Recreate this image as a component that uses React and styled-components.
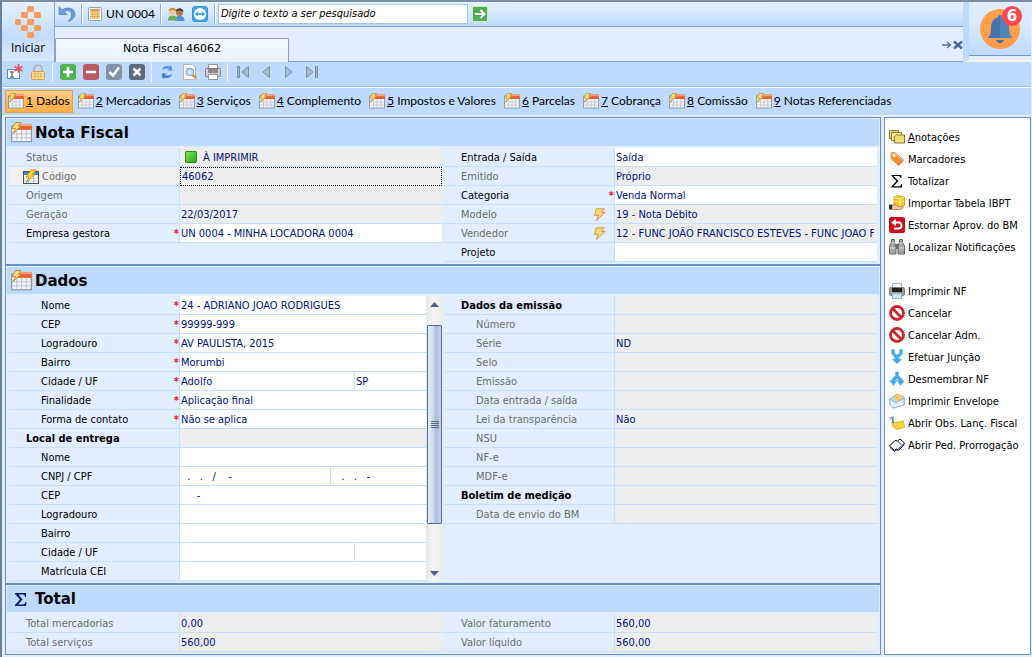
import React, { useId } from "react";
import styled, { createGlobalStyle, css } from "styled-components";

const uiFont = `"DejaVu Sans Condensed", "DejaVu Sans", sans-serif`;
const menuFont = `Lato, "Open Sans", sans-serif`;
const titleFont = `"DejaVu Sans", sans-serif`;

const GlobalStyle = createGlobalStyle`
  * {
    box-sizing: border-box;
  }
  body {
    margin: 0;
    background: #e2eeff;
    color: #000;
    font: 11px/18px ${uiFont};
  }
  button, input {
    margin: 0;
    padding: 0;
    border: 0;
    background: none;
    color: inherit;
    font: inherit;
  }
  svg {
    display: block;
    flex: none;
  }
`;

const Window = styled.div`
  min-height: 100vh;
  padding-right: 1px;
  border-top: 2px solid #7b8ea6;
  border-left: 2px solid #64819f;
`;

/* ---------- header ---------- */

const Header = styled.header`
  display: grid;
  grid-template-columns: 53px minmax(0, 1fr) 68px;
  height: 57px;
`;

const StartButton = styled.button`
  display: flex;
  flex-direction: column;
  align-items: center;
  justify-content: space-between;
  padding: 3px 0 4px;
  border-right: 1px solid #86a9da;
  border-bottom: 1px solid #bedaff;
  background: linear-gradient(#e6f0ff, #c3dcff 60%, #d9e9ff);
  font: 12px/18px "Open Sans", sans-serif;
`;

const HeaderCenter = styled.div`
  display: flex;
  flex-direction: column;
`;

const QuickBar = styled.div`
  display: flex;
  align-items: center;
  height: 25px;
  padding-bottom: 1px;
  border-bottom: 1px solid #7ba5de;
  background: linear-gradient(#e6f1ff, #d3e6ff 50%, #bedaff);
`;

const QuickButton = styled.button`
  display: flex;
  align-items: center;
  justify-content: center;
  gap: 4px;
  min-width: 24px;
  height: 22px;
  padding: 0 3px;
  font: 12px/18px ${menuFont};
`;

const Divider = styled.span`
  width: 2px;
  height: 20px;
  margin: 0 2px;
  border-left: 1px solid #8db2e3;
  border-right: 1px solid #fff;
`;

const SearchInput = styled.input`
  width: 250px;
  height: 20px;
  padding: 0 2px;
  border: 1px solid #a9c3e6;
  background: #fff;
  font-style: italic;
  &::placeholder {
    color: #000;
    opacity: 1;
  }
`;

const TabStrip = styled.div`
  display: flex;
  align-items: flex-end;
  flex: 1;
  border-bottom: 1px solid #8c9fc9;
  background: #e2eeff;
`;

const DocumentTab = styled.button`
  width: 234px;
  height: 24px;
  padding-bottom: 4px;
  margin-bottom: -1px;
  border: 1px solid #8c9fc9;
  border-bottom: 0;
  border-radius: 2px 2px 0 0;
  background: linear-gradient(#f4f8ff, #e9f2ff);
  font: 11px/18px ${titleFont};
`;

const StripActions = styled.div`
  display: flex;
  align-items: center;
  gap: 1px;
  height: 32px;
  margin-left: auto;
`;

const Notifications = styled.div`
  border-left: 6px solid #bedaff;
  border-bottom: 3px solid #f0f0f0;
`;

const BellButton = styled.button`
  position: relative;
  display: block;
  width: 100%;
  height: 54px;
  padding: 6px 11px;
  border-bottom: 1px solid #6f9bd6;
  background: linear-gradient(#e2eeff, #d3e6ff 60%, #bedaff);
`;

const Badge = styled.span`
  position: absolute;
  top: 4px;
  right: 9px;
  width: 20px;
  height: 20px;
  border-radius: 50%;
  background: #fb4a4c;
  color: #fff;
  font: bold 15px/20px ${titleFont};
  text-align: center;
`;

/* ---------- toolbars ---------- */

const Toolbar = styled.div`
  display: flex;
  align-items: center;
  height: 28px;
  padding: 0 0 1px 1px;
  border-bottom: 1px solid #8fb9f0;
  background: #bedaff;
`;

const ToolButton = styled.button`
  display: flex;
  align-items: center;
  justify-content: center;
  width: 23px;
  height: 22px;
`;

const ToolDivider = styled.span`
  width: 1px;
  height: 19px;
  margin: 0 3px;
  background: #eef5ff;
`;

const SectionTabs = styled.nav`
  display: flex;
  gap: 2px;
  padding: 2px 3px;
  border-top: 1px solid #fff;
  background: #bedaff;
`;

const SectionTab = styled.button`
  display: flex;
  align-items: center;
  gap: 2px;
  height: 23px;
  padding: 0 2px 1px;
  border: 1px solid transparent;
  font: 12px/18px ${menuFont};
  white-space: nowrap;
  ${(props) =>
    props.$active &&
    css`
      border-color: #dba04c;
      background: linear-gradient(#ffd08a, #ffb95c 50%, #ffad46);
    `}
`;

/* ---------- panels ---------- */

const Main = styled.main`
  display: grid;
  grid-template-columns: minmax(0, 1fr) 147px;
  gap: 3px;
  padding: 2px 0 1px 3px;
`;

const Panels = styled.div`
  display: flex;
  flex-direction: column;
`;

const Panel = styled.section`
  padding: 1px 1px 2px;
  border: 1px solid #6591cd;
  &:last-child {
    flex: 1;
  }
`;

const PanelHeader = styled.h2`
  display: flex;
  align-items: center;
  gap: 3px;
  height: ${(props) => (props.$compact ? 26 : 27)}px;
  margin: 0 0 2px;
  padding-left: 4px;
  background: #bedaff;
  font: bold 15px/20px ${titleFont};
`;

const PanelBody = styled.div`
  display: grid;
  grid-template-columns: repeat(2, minmax(0, 1fr));
  gap: 2px;
  padding: 0 2px;
`;

const Column = styled.div`
  display: flex;
`;

const Fields = styled.div`
  flex: 1;
  min-width: 0;
`;

const Row = styled.div`
  display: grid;
  grid-template-columns: 171px minmax(0, 1fr);
  height: 19px;
`;

const Label = styled.label`
  display: flex;
  align-items: center;
  gap: 3px;
  padding-top: 1px;
  padding-left: ${(props) => props.$indent}px;
  border-right: 1px solid #c6deff;
  border-bottom: 1px solid #c6deff;
  background: ${(props) => (props.$focused ? "#f0f0f0" : "none")};
  color: ${(props) => (props.$muted ? "#6d6d6d" : "#000")};
  font-weight: ${(props) => (props.$bold ? "bold" : "normal")};
  line-height: 17px;
  white-space: nowrap;
`;

const LabelMark = styled.span`
  display: flex;
  margin-left: auto;
  padding-right: ${(props) => (props.$wide ? 8 : 0)}px;
  color: #e8112d;
  font-weight: bold;
`;

const Value = styled.div`
  display: grid;
  grid-template-columns: ${(props) => props.$columns || "minmax(0, 1fr)"};
  padding-right: 3px;
  border-bottom: 1px solid #c6deff;
  background: ${(props) => (props.$muted ? "#eeeeee" : "#fff")};
  ${(props) =>
    props.$focused &&
    css`
      border: 1px dotted #000;
    `}
`;

const ValueInput = styled.input`
  width: 100%;
  min-width: 0;
  height: ${(props) => (props.$focused ? 17 : 18)}px;
  padding-top: ${(props) => (props.$focused ? 0 : 1)}px;
  padding-left: 1px;
  color: #00107e;
  line-height: 17px;
  & + & {
    border-left: 1px solid #c6deff;
  }
`;

const StatusMark = styled.span`
  width: 12px;
  height: 12px;
  margin: 3px 5px;
  border: 1px solid #2f8f1c;
  border-radius: 1px;
  background: linear-gradient(135deg, #7fe05c, #22ad18);
`;

const ScrollBar = styled.div`
  display: flex;
  flex-direction: column;
  width: 16px;
  padding-left: 1px;
  background: linear-gradient(90deg, #e6e6e6, #f4f4f4 40%, #ededed);
`;

const ScrollArrow = styled.button`
  display: flex;
  align-items: center;
  justify-content: center;
  height: 16px;
`;

const ScrollTrack = styled.div`
  flex: 1;
  padding-top: 13px;
`;

const ScrollThumb = styled.div`
  display: flex;
  align-items: center;
  justify-content: center;
  height: 83%;
  border: 1px solid #546a92;
  border-radius: 1px;
  background: linear-gradient(90deg, #e4eef6, #c9d8e6 45%, #a9bcd2 60%, #c6d6e8);
`;

/* ---------- side menu ---------- */

const SideMenu = styled.aside`
  display: flex;
  flex-direction: column;
  padding-top: 8px;
  border: 1px solid #6591cd;
  background: #fff;
`;

const SideItem = styled.button`
  display: flex;
  align-items: center;
  gap: 3px;
  height: 22px;
  padding-left: 4px;
  margin-top: ${(props) => (props.$spaced ? 22 : 0)}px;
  text-align: left;
  white-space: nowrap;
`;

const SideText = styled.span`
  padding-top: 1px;
`;

/* ---------- icons ---------- */

const Icon = ({ size = 16, box = 16, children }) => (
  <svg width={size} height={size} viewBox={`0 0 ${box} ${box}`} aria-hidden="true">
    {children}
  </svg>
);

const FormIcon = ({ size }) => (
  <Icon size={size}>
    <rect x="0.500" y="3" width="15" height="12" fill="#f4f5f8" stroke="#8f96a3" strokeWidth="0.900" />
    <rect x="5" y="1.500" width="11" height="4.500" fill="#e9602f" />
    <rect x="5" y="1.500" width="11" height="1.700" fill="#f3a07c" />
    <path d="M1 9h14M1 12h14M4.500 6v9M8 6v9M11.700 6v9" stroke="#b9c0cc" strokeWidth="0.700" />
    <path d="M3.500.400h4.200L5.500 3.200h2.200L1.500 9 3.400 5H.800z" fill="#ffdc70" stroke="#b58631" strokeWidth="0.700" />
  </Icon>
);

const CodeIcon = () => (
  <Icon>
    <rect x="0.500" y="2.500" width="15" height="12" fill="#fff" stroke="#4f4f4f" />
    <rect x="1" y="3" width="14" height="3" fill="#3f86d8" />
    <path d="M1 9h14M1 12h14M5.500 6v8M10.500 6v8" stroke="#9fb2c8" strokeWidth="0.700" />
    <path d="M8 1h5L9.500 5.500H12L3 14l3-6H3z" fill="#ffd42a" stroke="#b8860b" strokeWidth="0.700" />
  </Icon>
);

const BoltIcon = () => (
  <Icon size={13}>
    <path d="M4 1h10l-3.500 4.500H15L4 15.500 6.500 9H2z" fill="#ffd873" stroke="#c28b33" />
  </Icon>
);

const LogoIcon = () => (
  <svg width="32" height="34" viewBox="0 0 32 34" fill="#f99d5b" aria-hidden="true">
    <rect x="15" y="1" width="7" height="6" rx="1.500" />
    <rect x="9" y="7" width="7" height="6" rx="1.500" />
    <rect x="22" y="7" width="7" height="6" rx="1.500" />
    <rect x="3" y="14" width="6" height="6" rx="1.500" />
    <rect x="15" y="14" width="7" height="6" rx="1.500" />
    <rect x="9" y="20" width="7" height="6" rx="1.500" />
    <rect x="22" y="20" width="7" height="6" rx="1.500" />
    <rect x="15" y="27" width="7" height="6" rx="1.500" />
    <path d="M15 7.500h2M21 7.500h2M14 12.500l3 2M20 19l3 2M15 26.500h2M21 26.500h2" stroke="#f9b584" fill="none" />
  </svg>
);

const UndoIcon = () => (
  <Icon size={18}>
    <path d="M1 1.500v7h7L5.500 6C9 3.500 12 5.500 12 9c0 2-1 4-3 5.500 4-1 6-3.500 6-6.500 0-5-6-7-11.500-3.500z" fill="#6d9ae0" stroke="#4878c8" strokeWidth="0.600" />
  </Icon>
);

const GridIcon = () => (
  <Icon size={14} box={14}>
    <rect x="0.500" y="0.500" width="13" height="13" rx="1" fill="#fff" stroke="#8aa2c4" />
    <path d="M2 2h10v2H2z" fill="#f2a04e" />
    <path d="M2 5h10v7H2z" fill="#ffdf8c" />
    <path d="M2 4.500h10M2 7h10M2 9.500h10M4.500 2v10M7 2v10M9.500 2v10" stroke="#cf9348" strokeWidth="0.600" />
  </Icon>
);

const PeopleIcon = () => (
  <Icon size={18} box={18}>
    <path d="M8 16c0-4 2-5 4.500-5s5 1 5 5z" fill="#4d8fd6" />
    <circle cx="12.500" cy="7.500" r="3.500" fill="#a9784f" />
    <path d="M8.500 7c0-5 8-5 8 0-2-2-6-2-8 0z" fill="#4d3522" />
    <path d="M1 15.500c0-4 2-5 4.500-5s4.500 1 4.500 5z" fill="#6fae5c" />
    <circle cx="5.500" cy="7" r="3.500" fill="#f0c9a0" />
    <path d="M1.500 6.500c0-5 8-5 8 0-2-2-6-2-8 0z" fill="#c98a3c" />
  </Icon>
);

const RemoteIcon = () => (
  <Icon>
    <rect x="0.500" y="0.500" width="15" height="15" rx="2.500" fill="#45aae6" stroke="#2f92d0" />
    <circle cx="8" cy="8" r="6" fill="#fff" />
    <path d="M3 8l3-2.500v1.700h4V5.500L13 8l-3 2.500V8.800H6v1.700z" fill="#2f9fe0" />
  </Icon>
);

const GoIcon = () => (
  <Icon>
    <rect x="0.500" y="0.500" width="15" height="15" fill="#4fae4b" stroke="#d5e8d5" />
    <path d="M3 8h9M8.500 4l4 4-4 4" fill="none" stroke="#fff" strokeWidth="2" />
  </Icon>
);

const BellIcon = () => (
  <Icon size={40} box={40}>
    <circle cx="20" cy="20" r="20" fill="#ff9f4d" />
    <path d="M20 6c1.500 0 2 1 2 2.500 5 1 7 5 7 10 0 5 1 8 3 10.500H8c2-2.500 3-5.500 3-10.500 0-5 2-9 7-10C18 7 18.500 6 20 6z" fill="#4a72b0" />
    <path d="M20 6c1.500 0 2 1 2 2.500 5 1 7 5 7 10 0 5 1 8 3 10.500H20z" fill="#4f86b8" />
    <path d="M16 31h8c-1 4-7 4-8 0z" fill="#4a72b0" />
  </Icon>
);

const ArrowIcon = () => (
  <Icon size={10} box={10}>
    <path d="M0 5h8M5 2l3.500 3L5 8" fill="none" stroke="#4d74ad" strokeWidth="1.400" />
  </Icon>
);

const CrossIcon = () => (
  <Icon size={10} box={10}>
    <path d="M1 1.500l8 7M9 1.500l-8 7" stroke="#45699f" strokeWidth="2.400" />
  </Icon>
);

const NewIcon = () => (
  <Icon>
    <rect x="0.500" y="5.500" width="12" height="9" fill="#fff" stroke="#5b8ccc" />
    <path d="M3 8h4M5 8v5M3 13h4" stroke="#444" />
    <path d="M11.500 0v9M7.500 2.500l8 4.500M15.500 2.500l-8 4.500" stroke="#dd5555" strokeWidth="1.600" />
  </Icon>
);

const LockIcon = () => (
  <Icon>
    <path d="M4 8V5c0-5 8-5 8 0v3" fill="none" stroke="#b5b5b5" strokeWidth="2" />
    <rect x="1.500" y="7.500" width="13" height="8" rx="1" fill="#fbd98c" stroke="#d6a549" />
    <path d="M4 10h8M4 12.500h8" stroke="#c99a48" strokeDasharray="2 1" />
  </Icon>
);

const SquareIcon = ({ fill, path }) => (
  <Icon>
    <rect width="16" height="16" rx="3" fill={fill} />
    <path d={path} fill="none" stroke="#fff" strokeWidth="2.500" />
  </Icon>
);

const RefreshIcon = () => (
  <Icon>
    <path d="M3 6c1-3.500 4.500-5 7.500-3.500L12 1l1.500 5.500H8.500L10 5C7.500 3.800 5.500 4.500 3 6z" fill="#5b8fe0" />
    <path d="M13 10c-1 3.500-4.500 5-7.500 3.500L4 15 2.500 9.500h5L6 11c2.500 1.200 4.500.500 7-1z" fill="#4577cf" />
  </Icon>
);

const PreviewIcon = () => (
  <Icon>
    <path d="M1.500.500h9l3 3v12h-12z" fill="#fff" stroke="#b8b8b8" />
    <path d="M3 4h4M3 7h2M3 10h2" stroke="#c8c8c8" />
    <circle cx="8" cy="8" r="3.500" fill="#cfe7fb" stroke="#7aa9d6" strokeWidth="1.300" />
    <path d="M10.500 10.500l4 4" stroke="#d99a3e" strokeWidth="2.500" />
  </Icon>
);

const PrinterIcon = ({ dark }) => (
  <Icon>
    <rect x="3.500" y="0.500" width="9" height="5" fill="#fff" stroke={dark ? "#9db3cf" : "#999"} />
    <rect x="0.500" y="4.500" width="15" height="8" rx="1" fill={dark ? "#9a9a9a" : "#cfcfcf"} stroke="#808080" />
    <rect x="3" y="5" width="10" height="4" fill={dark ? "#222" : "#8a8a8a"} />
    <rect x="3.500" y="10.500" width="9" height="5" fill={dark ? "#cfe2f8" : "#fff"} stroke={dark ? "#9db3cf" : "#999"} />
  </Icon>
);

const NavIcon = ({ path }) => (
  <Icon>
    <path d={path} fill="#a9bacd" stroke="#7b8da5" />
  </Icon>
);

const SigmaIcon = () => (
  <Icon>
    <path d="M2.500 2h10v3h-1c0-1-.500-2-2-2h-5l5 5-5 5.200h6c1 0 1.500-.700 1.500-2h1V14.500h-11V14l5.500-6-5-5.300z" fill="#000" />
  </Icon>
);

const NotesIcon = () => (
  <Icon>
    <path d="M.500 1.500h9v8H.500z" fill="#f0dc8a" stroke="#8c7b2c" />
    <path d="M2.500 3.500h10v8h-10z" fill="#f5e7a0" stroke="#8c7b2c" />
    <path d="M5.500 7.500l2-1.500h8v8h-10z" fill="#f3dc7a" stroke="#8c7b2c" />
  </Icon>
);

const TagIcon = () => (
  <Icon>
    <path d="M2 3.500C2 2 4 1 5.500 1.500L14.500 9 10 14.500 2.500 8z" fill="#f89238" stroke="#e07a24" strokeLinejoin="round" />
    <path d="M3 4c1-2 2-2 3-1.500L13.500 9" fill="none" stroke="#ffc58a" />
    <circle cx="5" cy="4.500" r="1.500" fill="#fff" />
  </Icon>
);

const ImportIcon = () => (
  <Icon>
    <path d="M5 2l4-1.500L15.500 2v8.500L11 12 5 10z" fill="#f6c61e" stroke="#b98c0e" strokeWidth="0.700" />
    <path d="M5 2.500l6 1.500 4-2M11 4v8M5 6l6 1.500L15 6" fill="none" stroke="#fff0a0" />
    <path d="M3 10h3l4 1.500h4c1 1-1 3-4 3H3z" fill="#f3c99a" stroke="#a06f3c" strokeWidth="0.700" />
    <rect y="9.500" width="3" height="5" fill="#333" />
  </Icon>
);

const RevertIcon = () => (
  <Icon>
    <rect width="16" height="16" rx="2" fill="#cc0f18" />
    <path d="M5 5.500h4.500c4 0 4 6 0 6H5" fill="none" stroke="#fff" strokeWidth="2" />
    <path d="M2 5.500L7 2v7z" fill="#fff" />
  </Icon>
);

const BinocularsIcon = () => (
  <Icon>
    <path d="M2.500.500h3v3l1.500 3v8.500H.500V7L2.500 3zM10.500.500h3v3l2 3.500v8H9V6.500l1.500-3z" fill="#a5a5a5" stroke="#666" />
    <rect x="6.500" y="5" width="3" height="5" fill="#666" />
    <path d="M1 9h5.500M9.500 9H15M2.500 4h3M10.500 4h3" stroke="#e3e3e3" />
  </Icon>
);

const BlockIcon = () => (
  <Icon>
    <circle cx="8" cy="8" r="6.500" fill="#fff" stroke="#c6282d" strokeWidth="2.800" />
    <path d="M3.500 3.500l9 9" stroke="#c6282d" strokeWidth="2.800" />
  </Icon>
);

const JoinIcon = () => (
  <Icon>
    <path d="M2.500.500h3v3.500L8 6l2.500-2V.500h3V5L10 8.500V10h3l-5 5-5-5h3V8.500L2.500 5z" fill="#45abe8" stroke="#7cc4ee" strokeWidth="0.600" />
  </Icon>
);

const SplitIcon = () => (
  <Icon>
    <path d="M6.500 1h3v3.500L13 8v1.500h2.500l-4 5-3.500-5h2L8 7.500l-2 2h2l-3.500 5-4-5H3V8l3.500-3.500z" fill="#45a8e6" stroke="#6db9e8" strokeWidth="0.600" />
  </Icon>
);

const EnvelopeIcon = () => (
  <Icon>
    <path d="M1 6l7-5 7 3v8L4 15l-3-3z" fill="#b8dcf6" stroke="#7fa9d0" />
    <path d="M4 4l6-3 4 3-4 5z" fill="#fbc35b" />
    <path d="M1 6l6 4 8-5v7L4 15l-3-3z" fill="#e3f2fd" stroke="#7fa9d0" strokeWidth="0.800" />
  </Icon>
);

const NoteIcon = () => (
  <Icon>
    <path d="M3 6l3 1.500L14.500 6l1 6.500L7 14.500 3.500 11z" fill="#ffcf3a" stroke="#dca520" strokeWidth="0.700" />
    <path d="M3 2l1.500 6" stroke="#3f7fc0" strokeWidth="1.500" />
    <path d="M1 3.500L5 2" stroke="#78aee0" strokeWidth="2" />
  </Icon>
);

const BookIcon = () => (
  <Icon>
    <path d="M.500 9L6 3.500 8.500 4 11 2l4.500 4L9 12.500 7 12l-1.500 1.500z" fill="#fff" stroke="#000" />
    <path d="M1 10.500l4.500 4 2-1.500 2 .500 6-6" fill="none" stroke="#1c1c9c" />
    <path d="M8.500 4l4 4" stroke="#000" strokeWidth="0.700" />
  </Icon>
);

const Triangle = ({ down }) => (
  <Icon size={9} box={9}>
    <path d={down ? "M0 2h9L4.500 7z" : "M0 7h9L4.500 2z"} fill="#4b5c86" />
  </Icon>
);

/* ---------- data ---------- */

const sectionTabs = [
  "Dados",
  "Mercadorias",
  "Serviços",
  "Complemento",
  "Impostos e Valores",
  "Parcelas",
  "Cobrança",
  "Comissão",
  "Notas Referenciadas",
];

const invoiceLeft = [
  { label: "Status", value: "À IMPRIMIR", muted: true, status: true },
  { label: "Código", value: "46062", muted: true, focused: true },
  { label: "Origem", value: "", muted: true },
  { label: "Geração", value: "22/03/2017", muted: true },
  { label: "Empresa gestora", value: "UN 0004 - MINHA LOCADORA 0004", required: true },
];

const invoiceRight = [
  { label: "Entrada / Saída", value: "Saída" },
  { label: "Emitido", value: "Próprio", muted: true },
  { label: "Categoria", value: "Venda Normal", required: true },
  { label: "Modelo", value: "19 - Nota Débito", muted: true, bolt: true },
  {
    label: "Vendedor",
    value: "12 - FUNC JOÃO FRANCISCO ESTEVES - FUNC JOAO FRANCISCO",
    muted: true,
    bolt: true,
  },
  { label: "Projeto", value: "" },
];

const dataLeft = [
  { label: "Nome", value: "24 - ADRIANO JOAO RODRIGUES", indent: 32, required: true },
  { label: "CEP", value: "99999-999", indent: 32, required: true },
  { label: "Logradouro", value: "AV PAULISTA, 2015", indent: 32, required: true },
  { label: "Bairro", value: "Morumbi", indent: 32, required: true },
  { label: "Cidade / UF", value: "Adolfo", extra: "SP", columns: "174px 1fr", indent: 32, required: true },
  { label: "Finalidade", value: "Aplicação final", indent: 32, required: true },
  { label: "Forma de contato", value: "Não se aplica", indent: 32, required: true },
  { label: "Local de entrega", value: "", bold: true, mutedValue: true },
  { label: "Nome", value: "", indent: 32 },
  {
    label: "CNPJ / CPF",
    value: "\u00a0\u00a0.\u00a0\u00a0\u00a0.\u00a0\u00a0\u00a0/\u00a0\u00a0\u00a0\u00a0-",
    extra: "\u00a0\u00a0\u00a0.\u00a0\u00a0\u00a0.\u00a0\u00a0\u00a0-",
    columns: "150px 1fr",
    indent: 32,
  },
  { label: "CEP", value: "\u00a0\u00a0\u00a0\u00a0\u00a0-", indent: 32 },
  { label: "Logradouro", value: "", indent: 32 },
  { label: "Bairro", value: "", indent: 32 },
  { label: "Cidade / UF", value: "", extra: "", columns: "174px 1fr", indent: 32 },
  { label: "Matrícula CEI", value: "", indent: 32 },
];

const dataRight = [
  { label: "Dados da emissão", value: "", bold: true, mutedValue: true },
  { label: "Número", value: "", indent: 32, muted: true },
  { label: "Série", value: "ND", indent: 32, muted: true },
  { label: "Selo", value: "", indent: 32, muted: true },
  { label: "Emissão", value: "", indent: 32, muted: true },
  { label: "Data entrada / saída", value: "", indent: 32, muted: true },
  { label: "Lei da transparência", value: "Não", indent: 32, muted: true },
  { label: "NSU", value: "", indent: 32, muted: true },
  { label: "NF-e", value: "", indent: 32, muted: true },
  { label: "MDF-e", value: "", indent: 32, muted: true },
  { label: "Boletim de medição", value: "", bold: true, mutedValue: true },
  { label: "Data de envio do BM", value: "", indent: 32, muted: true },
];

const totalLeft = [
  { label: "Total mercadorias", value: "0,00", muted: true },
  { label: "Total serviços", value: "560,00", muted: true },
];

const totalRight = [
  { label: "Valor faturamento", value: "560,00", muted: true },
  { label: "Valor líquido", value: "560,00", muted: true },
];

const sideItems = [
  { label: <><u>A</u>notações</>, icon: <NotesIcon /> },
  { label: "Marcadores", icon: <TagIcon /> },
  { label: "Totalizar", icon: <SigmaIcon /> },
  { label: "Importar Tabela IBPT", icon: <ImportIcon /> },
  { label: "Estornar Aprov. do BM", icon: <RevertIcon /> },
  { label: "Localizar Notificações", icon: <BinocularsIcon /> },
  { label: "Imprimir NF", icon: <PrinterIcon dark />, spaced: true },
  { label: "Cancelar", icon: <BlockIcon /> },
  { label: "Cancelar Adm.", icon: <BlockIcon /> },
  { label: "Efetuar Junção", icon: <JoinIcon /> },
  { label: "Desmembrar NF", icon: <SplitIcon /> },
  { label: "Imprimir Envelope", icon: <EnvelopeIcon /> },
  { label: "Abrir Obs. Lanç. Fiscal", icon: <NoteIcon /> },
  { label: "Abrir Ped. Prorrogação", icon: <BookIcon /> },
];

/* ---------- parts ---------- */

const Field = ({ field }) => {
  const id = useId();
  const { label, value, extra, muted, bold, focused, indent = 17 } = field;
  return (
    <Row>
      <Label htmlFor={id} $indent={focused ? 14 : indent} $muted={muted} $bold={bold} $focused={focused}>
        {focused && <CodeIcon />}
        {label}
        {field.required && <LabelMark>*</LabelMark>}
        {field.bolt && (
          <LabelMark $wide>
            <BoltIcon />
          </LabelMark>
        )}
      </Label>
      <Value
        $muted={muted || field.mutedValue}
        $focused={focused}
        $columns={field.status ? "22px minmax(0, 1fr)" : field.columns}
      >
        {field.status && <StatusMark />}
        <ValueInput id={id} defaultValue={value} readOnly={muted} $focused={focused} />
        {extra !== undefined && <ValueInput aria-label={`${label} 2`} defaultValue={extra} />}
      </Value>
    </Row>
  );
};

const FieldList = ({ fields }) => (
  <Fields>
    {fields.map((field, index) => (
      <Field key={index} field={field} />
    ))}
  </Fields>
);

const App = () => {
  return (
    <Window>
      <GlobalStyle />
      <Header>
        <StartButton>
          <LogoIcon />
          Iniciar
        </StartButton>
        <HeaderCenter>
          <QuickBar>
            <QuickButton aria-label="Desfazer">
              <UndoIcon />
            </QuickButton>
            <Divider />
            <QuickButton>
              <GridIcon />
              UN 0004
            </QuickButton>
            <Divider />
            <QuickButton aria-label="Usuários">
              <PeopleIcon />
            </QuickButton>
            <QuickButton aria-label="Acesso remoto">
              <RemoteIcon />
            </QuickButton>
            <Divider />
            <SearchInput aria-label="Pesquisar" placeholder="Digite o texto a ser pesquisado" />
            <QuickButton aria-label="Ir">
              <GoIcon />
            </QuickButton>
          </QuickBar>
          <TabStrip>
            <DocumentTab>Nota Fiscal 46062</DocumentTab>
            <StripActions>
              <button aria-label="Próxima aba">
                <ArrowIcon />
              </button>
              <button aria-label="Fechar">
                <CrossIcon />
              </button>
            </StripActions>
          </TabStrip>
        </HeaderCenter>
        <Notifications>
          <BellButton aria-label="Notificações">
            <BellIcon />
            <Badge>6</Badge>
          </BellButton>
        </Notifications>
      </Header>

      <Toolbar>
        <ToolButton aria-label="Novo">
          <NewIcon />
        </ToolButton>
        <ToolButton aria-label="Bloquear">
          <LockIcon />
        </ToolButton>
        <ToolDivider />
        <ToolButton aria-label="Incluir">
          <SquareIcon fill="#52b152" path="M8 3v10M3 8h10" />
        </ToolButton>
        <ToolButton aria-label="Excluir">
          <SquareIcon fill="#b95d62" path="M3 8h10" />
        </ToolButton>
        <ToolButton aria-label="Confirmar">
          <SquareIcon fill="#8493a5" path="M3.500 8l3.500 3.500 6-8" />
        </ToolButton>
        <ToolButton aria-label="Cancelar">
          <SquareIcon fill="#5d6b7c" path="M4.500 4.500l7 7M11.500 4.500l-7 7" />
        </ToolButton>
        <ToolDivider />
        <ToolButton aria-label="Atualizar">
          <RefreshIcon />
        </ToolButton>
        <ToolButton aria-label="Visualizar">
          <PreviewIcon />
        </ToolButton>
        <ToolButton aria-label="Imprimir">
          <PrinterIcon />
        </ToolButton>
        <ToolDivider />
        <ToolButton aria-label="Primeiro">
          <NavIcon path="M2.500 2.500h2v11h-2zM13.500 2.500v11L7 8z" />
        </ToolButton>
        <ToolButton aria-label="Anterior">
          <NavIcon path="M11.500 2.500v11L5 8z" />
        </ToolButton>
        <ToolButton aria-label="Próximo">
          <NavIcon path="M4.500 2.500v11L11 8z" />
        </ToolButton>
        <ToolButton aria-label="Último">
          <NavIcon path="M2.500 2.500v11L9 8zM11.500 2.500h2v11h-2z" />
        </ToolButton>
      </Toolbar>

      <SectionTabs>
        {sectionTabs.map((name, index) => (
          <SectionTab key={name} $active={index === 0}>
            <FormIcon />
            <span>
              <u>{index + 1}</u> {name}
            </span>
          </SectionTab>
        ))}
      </SectionTabs>

      <Main>
        <Panels>
          <Panel>
            <PanelHeader>
              <FormIcon size={21} />
              Nota Fiscal
            </PanelHeader>
            <PanelBody>
              <FieldList fields={invoiceLeft} />
              <FieldList fields={invoiceRight} />
            </PanelBody>
          </Panel>
          <Panel>
            <PanelHeader>
              <FormIcon size={21} />
              Dados
            </PanelHeader>
            <PanelBody>
              <Column>
                <FieldList fields={dataLeft} />
                <ScrollBar>
                  <ScrollArrow aria-label="Rolar para cima">
                    <Triangle />
                  </ScrollArrow>
                  <ScrollTrack>
                    <ScrollThumb>
                      <Icon size={8} box={8}>
                        <path d="M0 .500h8M0 2.500h8M0 4.500h8M0 6.500h8" stroke="#5b6b8c" />
                      </Icon>
                    </ScrollThumb>
                  </ScrollTrack>
                  <ScrollArrow aria-label="Rolar para baixo">
                    <Triangle down />
                  </ScrollArrow>
                </ScrollBar>
              </Column>
              <FieldList fields={dataRight} />
            </PanelBody>
          </Panel>
          <Panel>
            <PanelHeader $compact>
              <Icon size={21} box={21}>
                <path d="M4 4h11v4h-1c0-1.500-1-2.500-2-2.500H7.500l4 5-4.500 5H12c1.500 0 2-1 2.500-2.500h1L15 17H4v-1l5-5.500-5-5.500z" fill="#0a1f7a" />
              </Icon>
              Total
            </PanelHeader>
            <PanelBody>
              <FieldList fields={totalLeft} />
              <FieldList fields={totalRight} />
            </PanelBody>
          </Panel>
        </Panels>
        <SideMenu>
          {sideItems.map((item, index) => (
            <SideItem key={index} $spaced={item.spaced}>
              {item.icon}
              <SideText>{item.label}</SideText>
            </SideItem>
          ))}
        </SideMenu>
      </Main>
    </Window>
  );
};

export default App;
